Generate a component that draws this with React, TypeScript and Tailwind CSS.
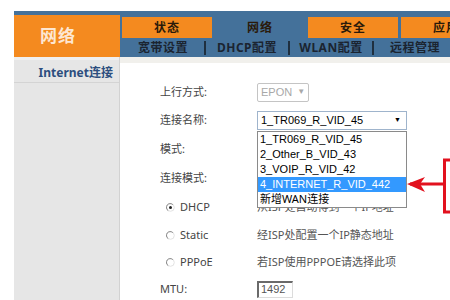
import React from 'react';

const tabs = [
  { label: '状态', active: false },
  { label: '网络', active: true },
  { label: '安全', active: false },
  { label: '应用', active: false },
];

const subTabs = ['宽带设置', 'DHCP配置', 'WLAN配置', '远程管理'];

const options = ['1_TR069_R_VID_45', '2_Other_B_VID_43', '3_VOIP_R_VID_42', '4_INTERNET_R_VID_442', '新增WAN连接'];

const Radio: React.FC<{ checked?: boolean }> = ({ checked }) => (
  <svg width="9" height="9" viewBox="0 0 9 9" className="shrink-0">
    <circle cx="4.5" cy="4.5" r="3.8" fill="#fff" stroke="#e2e2e2" strokeWidth="1" />
    <path d="M6.8 1.6 A3.8 3.8 0 1 0 2.2 7.6" fill="none" stroke="#8a8a8a" strokeWidth="1" />
    {checked && <circle cx="4.5" cy="4.5" r="1.5" fill="#222" />}
  </svg>
);

const App: React.FC = () => {
  const cjk = { fontFamily: '"Noto Sans", "Noto Sans CJK SC", sans-serif' };
  const arial = { fontFamily: '"Liberation Sans", "Noto Sans CJK SC", sans-serif' };

  return (
    <div className="w-[450px] h-[300px] overflow-hidden bg-white relative" style={cjk}>
      <div className="pt-[11px] pl-[14px] w-[520px]">
        {/* Header */}
        <div className="flex bg-[#44719a] pt-[4px] h-[46px]">
          <div className="w-[106px] h-[42px] bg-[#f48a1f] flex items-center pl-[26px] text-[17px] font-bold text-[#fde7d2] tracking-[1px]">
            网络
          </div>
          <div className="ml-[2px] flex flex-col">
            <div className="flex gap-[3px] pt-[2px] h-[23px]">
              {tabs.map((t) => (
                <div
                  key={t.label}
                  className={`w-[90px] h-[21px] flex items-center justify-center text-[12px] font-bold text-[#2a1a0a] tracking-[1px] ${
                    t.active ? 'bg-[#44719a]' : 'bg-[#f48a1f]'
                  }`}
                >
                  {t.label}
                </div>
              ))}
            </div>
            <div className="flex h-[19px] items-center">
              {subTabs.map((s, i) => (
                <div key={s} className="flex items-center">
                  {i > 0 && <div className="w-[2px] h-[14px] bg-[#1f2f3f]" />}
                  <div className="w-[82px] flex justify-center text-[12px] font-bold text-[#1b2430] tracking-[0.5px]">
                    {s}
                  </div>
                </div>
              ))}
            </div>
          </div>
        </div>

        {/* Body */}
        <div className="flex h-[243px]">
          <div className="w-[106px] bg-[#e6e6e6] border-r border-[#d2d2d2] flex flex-col">
            <div className="h-[3px] bg-[#efefef]" />
            <div className="h-[23px] flex items-center justify-end pr-[6px] pt-[3px] text-[12px] font-bold text-[#2c4e7e] border-b border-[#d4d4d4]">
              Internet连接
            </div>
          </div>

          <div className="flex-1 relative">
            <div className="h-[6px] bg-[#f1f0ec]" />
            <div className="pt-[15px] pl-[40px] flex flex-col text-[11px] text-[#444]">
              <div className="h-[28px] flex items-center">
                <div className="w-[97px]">上行方式:</div>
                <div className="w-[52px] h-[19px] border border-[#c4c4c4] rounded-[2px] flex items-center px-[3px] gap-[5px] text-[#a8a8a8]" style={arial}>
                  <span className="text-[11px]">EPON</span>
                  <span className="text-[8px]">▼</span>
                </div>
              </div>
              <div className="h-[29px] flex items-center">
                <div className="w-[97px]">连接名称:</div>
                <div className="w-[150px] h-[19px] border border-[#9fb4cc] flex items-center justify-between pl-[3px] pr-[5px] text-black" style={arial}>
                  <span className="text-[11px]">1_TR069_R_VID_45</span>
                  <span className="text-[7px]">▼</span>
                </div>
              </div>
              <div className="h-[28px] flex items-center">
                <div className="w-[97px]">模式:</div>
              </div>
              <div className="h-[30px] flex items-center">
                <div className="w-[97px]">连接模式:</div>
              </div>
              <div className="h-[29px] flex items-center">
                <div className="w-[97px] flex items-center gap-[5px] pl-[6px]">
                  <Radio checked />
                  <span>DHCP</span>
                </div>
                <div className="text-[#555]">从ISP处自动得到一个IP地址</div>
              </div>
              <div className="h-[27px] flex items-center">
                <div className="w-[97px] flex items-center gap-[5px] pl-[6px]">
                  <Radio />
                  <span>Static</span>
                </div>
                <div className="text-[#555]">经ISP处配置一个IP静态地址</div>
              </div>
              <div className="h-[27px] flex items-center">
                <div className="w-[97px] flex items-center gap-[5px] pl-[6px]">
                  <Radio />
                  <span>PPPoE</span>
                </div>
                <div className="text-[#555]">若ISP使用PPPOE请选择此项</div>
              </div>
              <div className="h-[26px] flex items-center">
                <div className="w-[97px]">MTU:</div>
                <div className="w-[36px] h-[17px] border-t-2 border-l-2 border-b border-r border-t-[#6a6a6a] border-l-[#6a6a6a] border-b-[#dcdcdc] border-r-[#dcdcdc] flex items-center pl-[2px] text-[#555]" style={arial}>
                  1492
                </div>
              </div>
            </div>

            {/* Open dropdown list */}
            <div className="absolute left-[137px] top-[74px] w-[150px] bg-white border border-[#8a8a8a] text-[11px] text-black" style={arial}>
              {options.map((o, i) => (
                <div
                  key={o}
                  className={`h-[15px] flex items-center pl-[2px] ${i === 3 ? 'bg-[#3399ff] text-white' : ''}`}
                  style={i === 4 ? cjk : undefined}
                >
                  {o}
                </div>
              ))}
            </div>
          </div>
        </div>
      </div>

      {/* Red annotation */}
      <svg className="absolute left-[400px] top-[150px]" width="50" height="70" viewBox="0 0 50 70">
        <path d="M44 10 L50 10 M44.5 8.5 L44.5 63.5 M44 62 L50 62" stroke="#e2111e" strokeWidth="3" fill="none" />
        <path d="M10 34 L44 34" stroke="#e2111e" strokeWidth="3" fill="none" />
        <path d="M7 34 L25 27 L20 34 L25 42 Z" fill="#e2111e" />
      </svg>
    </div>
  );
};

export default App;
